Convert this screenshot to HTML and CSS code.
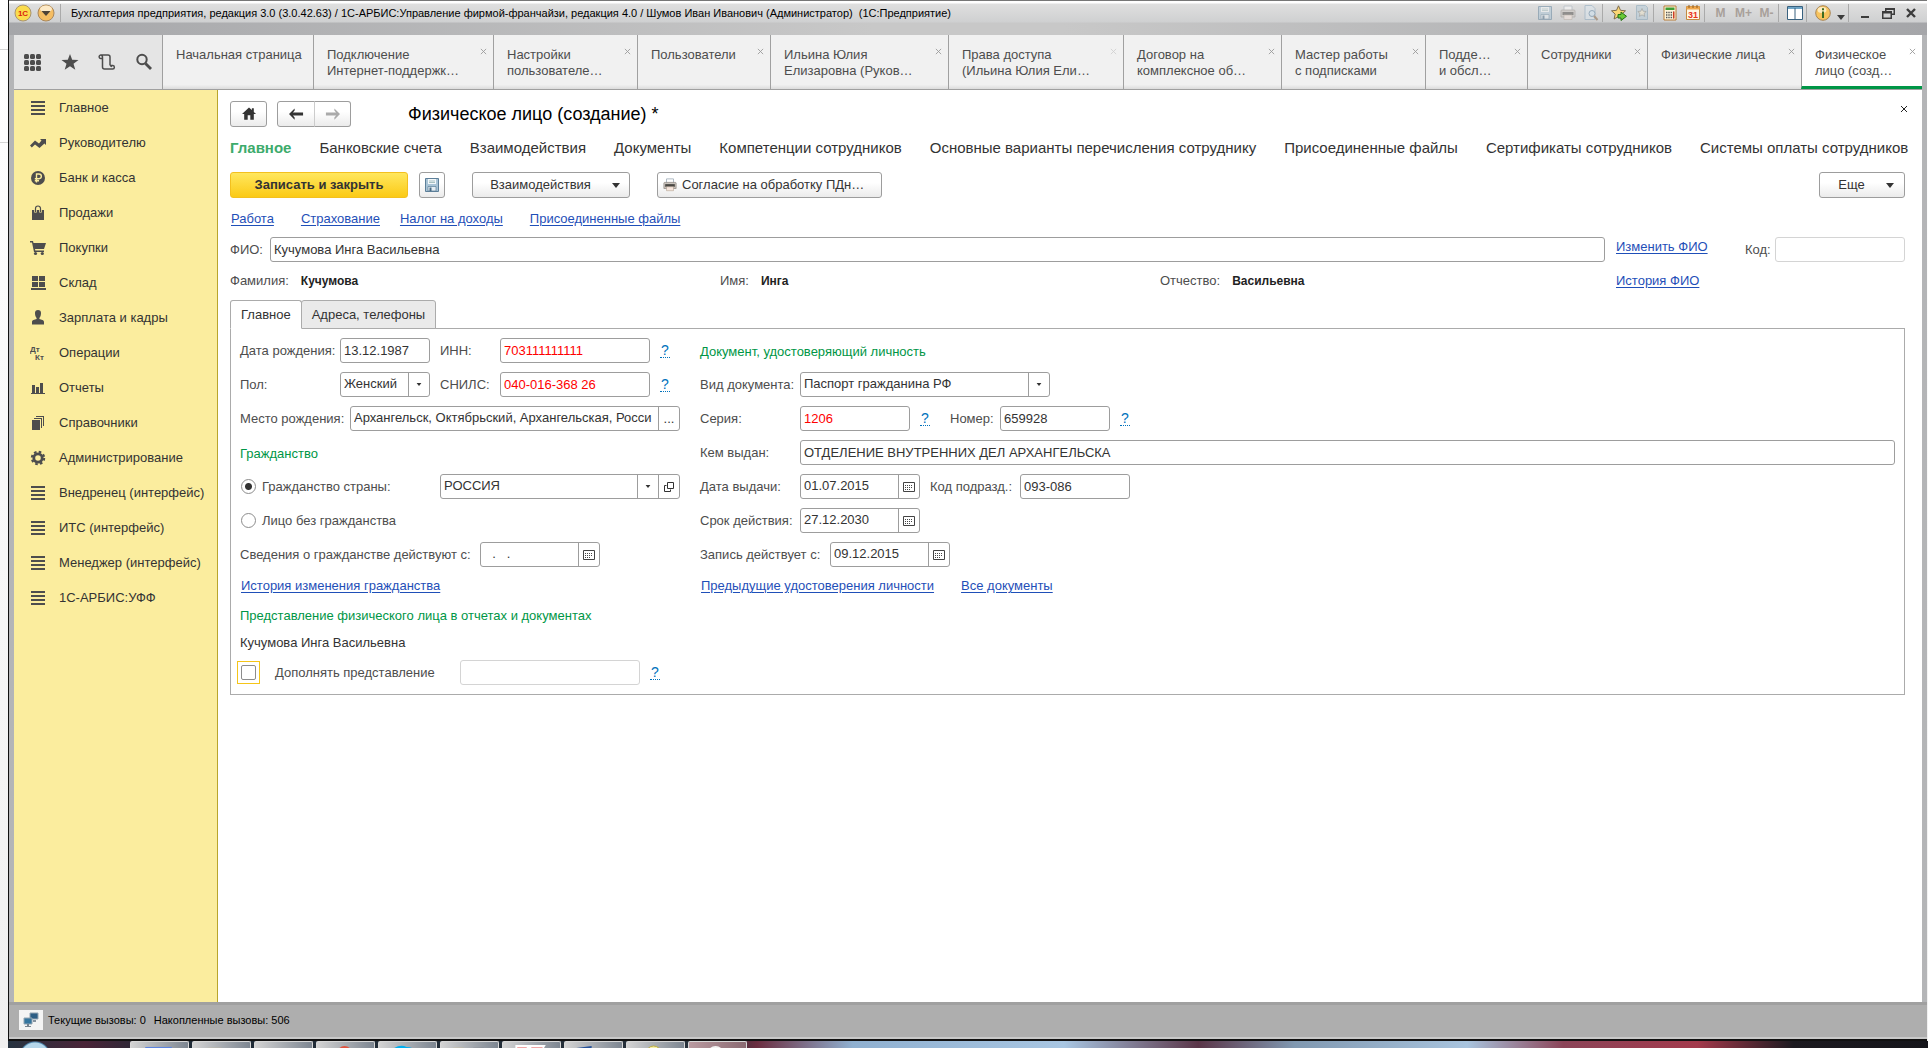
FILE: index.html
```html
<!DOCTYPE html>
<html lang="ru">
<head>
<meta charset="utf-8">
<title>Физическое лицо (создание)</title>
<link rel="stylesheet" href="styles.css">
</head>
<body>
<svg class="sprite" aria-hidden="true">
  <symbol id="i-lines" viewBox="0 0 16 16"><path d="M1 1h14v2H1zM1 5h14v2H1zM1 9h14v2H1zM1 13h14v2H1z"/></symbol>
  <symbol id="i-trend" viewBox="0 0 16 16"><path d="M0 10.500 5 5.500 9 8.500 11.500 5.500 10 4h6v6l-1.600-1.600L9.500 13 5 9.500 1.800 12.500z"/></symbol>
  <symbol id="i-ruble" viewBox="0 0 16 16"><circle cx="8" cy="8" r="7"/><path d="M6.500 12.500V4H9a2.300 2.300 0 0 1 0 4.700H4.800M4.800 10.700H9" fill="none" stroke="#fbed9e" stroke-width="1.400"/></symbol>
  <symbol id="i-bag" viewBox="0 0 16 16"><path d="M2 5h12v10H2z"/><path d="M5.500 7.500V3.500a2.500 2.500 0 0 1 5 0v4" fill="none" stroke="#fbed9e" stroke-width="2.600"/><path d="M5.500 7V3.500a2.500 2.500 0 0 1 5 0V7" fill="none" stroke="#4d4d4d" stroke-width="1.200"/></symbol>
  <symbol id="i-cart" viewBox="0 0 16 16"><path d="M0 1h3l.5 2H16l-2 6H5l.3 1.500H14V12H4L2 2.500H0z"/><circle cx="5.500" cy="13.500" r="1.600"/><circle cx="12.300" cy="13.500" r="1.600"/></symbol>
  <symbol id="i-store" viewBox="0 0 16 16"><path d="M2 1h6v5H2zM9 1h6v5H9zM2 7h6v5H2zM9 7h6v5H9zM1 13h15v2H1z"/></symbol>
  <symbol id="i-person" viewBox="0 0 16 16"><path d="M5 3a3 3 0 0 1 6 0c0 2-.6 4-1.600 5v1c2 .6 4.600.8 4.600 3v2.500H2V12c0-2.200 2.600-2.400 4.600-3V8C5.600 7 5 5 5 3z"/></symbol>
  <symbol id="i-bars" viewBox="0 0 16 16"><path d="M2 5h3v8H2zM6 7h3v6H6zM10 3h3v10h-3zM1 13h14v1H1z"/></symbol>
  <symbol id="i-books" viewBox="0 0 16 16"><path d="M2 5h8v10H2zM4 3h8v10h-1V4H4zM6 1h8v10h-1V2H6z"/></symbol>
  <symbol id="i-gear" viewBox="0 0 16 16"><circle cx="8" cy="8" r="4.200" fill="none" stroke="#4d4d4d" stroke-width="2.800"/><circle cx="8" cy="8" r="6.200" fill="none" stroke="#4d4d4d" stroke-width="2" stroke-dasharray="2.600 2.270"/></symbol>
  <symbol id="i-floppy" viewBox="0 0 16 16"><path d="M1.500 1.500h13v13h-13z" fill="#a9c4d6" stroke="#5c7f99"/><path d="M4 2h8v5H4z" fill="#f4f8fa"/><path d="M5 4h6M5 5.500h6" stroke="#8aa" stroke-width=".7"/><path d="M4 9.500h8V14H4z" fill="#e6eef3" stroke="#5c7f99" stroke-width=".7"/><path d="M5.500 10.500h2V14h-2z" fill="#476a85"/></symbol>
  <symbol id="i-printer" viewBox="0 0 16 16"><path d="M4 1h8v5H4z" fill="#fff" stroke="#a4b0bb"/><path d="M1 6q0-1 1-1h12q1 0 1 1v6H1z" fill="#c9c3bd" stroke="#8e8780" stroke-width=".8"/><path d="M2.500 7h11v3h-11z" fill="#4a4743"/><path d="M4 10h8v4.500H4z" fill="#f6e5dc" stroke="#a98" stroke-width=".6"/></symbol>
  <symbol id="i-preview" viewBox="0 0 16 16"><path d="M2 .5h7l3 3v11H2z" fill="#dce7ef" stroke="#86a5bd"/><circle cx="9" cy="8.500" r="3" fill="#cfe4f3" stroke="#567f9f"/><path d="m11 11 3.500 4" stroke="#85613f" stroke-width="2"/></symbol>
  <symbol id="i-staradd" viewBox="0 0 16 16"><path d="m7.500.8 2 4.500 5 .5-3.700 3.300 1.100 4.900-4.400-2.500L3.100 14l1.100-4.900L.5 5.800l5-.5z" fill="#fbd674" stroke="#7d6b4c"/><path d="M7 9.500h3V7l5.500 4.300-5.500 4.200V13H7z" fill="#69c936" stroke="#257014"/></symbol>
  <symbol id="i-stardoc" viewBox="0 0 16 16"><path d="M2.500.5h9l2 2v12h-11z" fill="#b4cbd9" stroke="#7ea0b5"/><path d="m8 3.500 1.200 2.700 3 .3-2.200 2 .7 2.900L8 9.900l-2.700 1.500.7-2.900-2.200-2 3-.3z" fill="#eee5ca" stroke="#6a6f6c" stroke-width=".7"/></symbol>
  <symbol id="i-calc" viewBox="0 0 16 16"><path d="M2 1h12v14H2z" fill="#fff6dc" stroke="#b77d38"/><path d="M3.500 2.500h9v2.500h-9z" fill="#3e9e31"/><path d="M4 7.500h8M4 10h8M4 12.500h8" stroke="#555" stroke-width="1.400" stroke-dasharray="1.400 .9"/><path d="M11 6.500h1.500v7H11z" fill="#cf3d25"/></symbol>
  <symbol id="i-cal31" viewBox="0 0 16 16"><path d="M1.500 1.500h13v13h-13z" fill="#fff7e6" stroke="#c28a42"/><path d="M1.500 1.500h13v3h-13z" fill="#f0a74b"/><path d="M4 0v3M8 0v3M12 0v3" stroke="#8e5d22"/><text x="8" y="13" text-anchor="middle" font-size="9" font-weight="bold" font-family="Liberation Sans, sans-serif" fill="#e8321c">31</text></symbol>
  <symbol id="i-cols" viewBox="0 0 16 16"><path d="M.5 1.500h15v13H.5z" fill="#fff" stroke="#38617f"/><path d="M1 2h14v2H1z" fill="#6fa5c7"/><path d="M8 3v11" stroke="#38617f"/></symbol>
  <symbol id="i-info" viewBox="0 0 16 16"><circle cx="8" cy="8" r="7.300" fill="#f8c45e" stroke="#a88555"/><ellipse cx="7" cy="5" rx="4.500" ry="3" fill="#fdebbf"/><path d="M7 6.500h2V13H7zM7 3.200h2v2H7z" fill="#3d6b22"/></symbol>
  <symbol id="i-down" viewBox="0 0 8 5"><path d="M0 0h8L4 5z"/></symbol>
  <symbol id="i-min" viewBox="0 0 16 16"><path d="M4 11h8v2H4z"/></symbol>
  <symbol id="i-restore" viewBox="0 0 16 16"><path d="M5 3h10v7h-3v4H2V6h3zm1.500 2v1H12v2.500h1.500V5zM3.500 8.500v4h7v-4z" fill-rule="evenodd"/></symbol>
  <symbol id="i-x" viewBox="0 0 16 16"><path d="m4 4 8 8M12 4l-8 8" stroke="#3c3c3c" stroke-width="2.400"/></symbol>
  <symbol id="i-xthin" viewBox="0 0 8 8"><path d="m1 1 6 6M7 1 1 7" stroke="currentColor" fill="none"/></symbol>
  <symbol id="i-grid" viewBox="0 0 18 18"><rect x="0" y="1" width="5" height="5" rx="1.500"/><rect x="6" y="1" width="5" height="5" rx="1.500"/><rect x="12" y="1" width="5" height="5" rx="1.500"/><rect x="0" y="7" width="5" height="5" rx="1.500"/><rect x="6" y="7" width="5" height="5" rx="1.500"/><rect x="12" y="7" width="5" height="5" rx="1.500"/><rect x="0" y="13" width="5" height="5" rx="1.500"/><rect x="6" y="13" width="5" height="5" rx="1.500"/><rect x="12" y="13" width="5" height="5" rx="1.500"/></symbol>
  <symbol id="i-star" viewBox="0 0 18 18"><path d="m9 1 2.200 5.800 6.300.2-5 3.800 1.800 6-5.300-3.500-5.300 3.500 1.800-6L.5 7l6.300-.2z"/></symbol>
  <symbol id="i-scroll" viewBox="0 0 18 18"><path d="M4.500 5.500H2.800a1.700 1.700 0 1 1 .2-3.500h7a2 2 0 0 1 2 2v8.500M4.500 5.500V14a2 2 0 0 0 2 2h8.200a1.700 1.700 0 1 0-1.700-2M3.200 2q1.500.4 1.300 3.500M12 12.500h2.500" fill="none" stroke="#4d4d4d" stroke-width="1.500"/></symbol>
  <symbol id="i-search" viewBox="0 0 18 18"><circle cx="7" cy="6.500" r="4.700" fill="none" stroke="#4d4d4d" stroke-width="2"/><path d="m10.500 10.500 5.500 5.500" stroke="#4d4d4d" stroke-width="2.800"/></symbol>
  <symbol id="i-home" viewBox="0 0 16 14"><path d="M8 0 0 7.500h2.500V14h4V9h3v5h4V7.500H16L13.500 5.200V1h-2.200v2z"/></symbol>
  <symbol id="i-left" viewBox="0 0 16 12"><path d="m0 6 6-6v2.200L4.200 4.500H15v3H4.200L6 9.800V12z"/></symbol>
  <symbol id="i-open" viewBox="0 0 10 10"><path d="M3.500.5h6v6h-6zM2.500 3.500h-2v6h6v-2" fill="none" stroke="#333"/></symbol>
  <symbol id="i-cal" viewBox="0 0 12 10"><path d="M.5.500h11v9H.5z" fill="none" stroke="#444"/><path d="M2 3.500h8M2 5.500h8M2 7.500h5" stroke="#444" stroke-dasharray="1 1"/></symbol>
  <symbol id="i-net" viewBox="0 0 16 16"><path d="M7 1h8v6H7z" fill="#2c5d84" stroke="#93a4b2"/><path d="M10 8h3v2h-3z" fill="#8794a0"/><path d="M1 6h8v6H1z" fill="#35769f" stroke="#93a4b2"/><path d="M4 12h2v2h2v1H2v-1h2z" fill="#77838e"/></symbol>
</svg>

<div class="window">
  <header class="titlebar">
    <svg class="logo" viewBox="0 0 18 18"><circle cx="9" cy="9" r="8" fill="#fbdc4c" stroke="#a99470"/><text x="9" y="12" text-anchor="middle" font-size="8" font-weight="bold" font-family="Liberation Sans, sans-serif" fill="#d8230e">1С</text></svg>
    <svg class="logo" viewBox="0 0 18 18"><circle cx="9" cy="9" r="8" fill="#f5bd62" stroke="#a9875c"/><ellipse cx="9" cy="5" rx="6" ry="3.500" fill="#fdeac7"/><path d="M4.500 7h9L9 12z" fill="#4e4336"/></svg>
    <i class="tb-sep"></i>
    <span class="app-title">Бухгалтерия предприятия, редакция 3.0 (3.0.42.63) / 1С-АРБИС:Управление фирмой-франчайзи, редакция 4.0 / Шумов Иван Иванович (Администратор)&nbsp; (1С:Предприятие)</span>
    <button class="tb dim" aria-label="Сохранить"><svg><use href="#i-floppy"/></svg></button>
    <button class="tb dim" aria-label="Печать"><svg><use href="#i-printer"/></svg></button>
    <button class="tb dim" aria-label="Просмотр"><svg><use href="#i-preview"/></svg></button>
    <i class="tb-sep"></i>
    <button class="tb" aria-label="В избранное"><svg><use href="#i-staradd"/></svg></button>
    <button class="tb dim" aria-label="Избранное"><svg><use href="#i-stardoc"/></svg></button>
    <i class="tb-sep"></i>
    <button class="tb" aria-label="Калькулятор"><svg><use href="#i-calc"/></svg></button>
    <button class="tb" aria-label="Календарь"><svg><use href="#i-cal31"/></svg></button>
    <i class="tb-sep"></i>
    <button class="tb mem">M</button>
    <button class="tb mem">M+</button>
    <button class="tb mem">M-</button>
    <i class="tb-sep"></i>
    <button class="tb" aria-label="Окна"><svg><use href="#i-cols"/></svg></button>
    <i class="tb-sep"></i>
    <button class="tb" aria-label="Справка"><svg><use href="#i-info"/></svg></button>
    <button class="tb slim" aria-label="Меню справки"><svg><use href="#i-down"/></svg></button>
    <i class="tb-sep"></i>
    <button class="tb" aria-label="Свернуть"><svg><use href="#i-min"/></svg></button>
    <button class="tb" aria-label="Восстановить"><svg><use href="#i-restore"/></svg></button>
    <button class="tb" aria-label="Закрыть"><svg><use href="#i-x"/></svg></button>
  </header>

  <div class="tabbar">
    <div class="tools">
      <button aria-label="Все функции"><svg><use href="#i-grid"/></svg></button>
      <button aria-label="Избранное"><svg><use href="#i-star"/></svg></button>
      <button aria-label="История"><svg><use href="#i-scroll"/></svg></button>
      <button aria-label="Поиск"><svg><use href="#i-search"/></svg></button>
    </div>
    <nav class="tabs">
      <div class="tab"><a href="#">Начальная страница</a></div>
      <div class="tab"><a href="#">Подключение<br>Интернет-поддержк…</a><button class="tab-x" aria-label="Закрыть"><svg><use href="#i-xthin"/></svg></button></div>
      <div class="tab"><a href="#">Настройки<br>пользователе…</a><button class="tab-x" aria-label="Закрыть"><svg><use href="#i-xthin"/></svg></button></div>
      <div class="tab"><a href="#">Пользователи</a><button class="tab-x" aria-label="Закрыть"><svg><use href="#i-xthin"/></svg></button></div>
      <div class="tab"><a href="#">Ильина Юлия<br>Елизаровна (Руков…</a><button class="tab-x" aria-label="Закрыть"><svg><use href="#i-xthin"/></svg></button></div>
      <div class="tab"><a href="#">Права доступа<br>(Ильина Юлия Ели…</a><button class="tab-x off" aria-label="Закрыть"><svg><use href="#i-xthin"/></svg></button></div>
      <div class="tab"><a href="#">Договор на<br>комплексное об…</a><button class="tab-x" aria-label="Закрыть"><svg><use href="#i-xthin"/></svg></button></div>
      <div class="tab"><a href="#">Мастер работы<br>с подписками</a><button class="tab-x" aria-label="Закрыть"><svg><use href="#i-xthin"/></svg></button></div>
      <div class="tab"><a href="#">Подде…<br>и обсл…</a><button class="tab-x" aria-label="Закрыть"><svg><use href="#i-xthin"/></svg></button></div>
      <div class="tab"><a href="#">Сотрудники</a><button class="tab-x" aria-label="Закрыть"><svg><use href="#i-xthin"/></svg></button></div>
      <div class="tab"><a href="#">Физические лица</a><button class="tab-x" aria-label="Закрыть"><svg><use href="#i-xthin"/></svg></button></div>
      <div class="tab active"><a href="#">Физическое<br>лицо (созд…</a><button class="tab-x" aria-label="Закрыть"><svg><use href="#i-xthin"/></svg></button></div>
    </nav>
  </div>

  <div class="body">
    <nav class="sidebar">
      <a href="#"><svg><use href="#i-lines"/></svg>Главное</a>
      <a href="#"><svg><use href="#i-trend"/></svg>Руководителю</a>
      <a href="#"><svg><use href="#i-ruble"/></svg>Банк и касса</a>
      <a href="#"><svg><use href="#i-bag"/></svg>Продажи</a>
      <a href="#"><svg><use href="#i-cart"/></svg>Покупки</a>
      <a href="#"><svg><use href="#i-store"/></svg>Склад</a>
      <a href="#"><svg><use href="#i-person"/></svg>Зарплата и кадры</a>
      <a href="#"><svg viewBox="0 0 16 16" class="dtkt"><text x="0" y="7">Дт</text><text x="5" y="15">Кт</text></svg>Операции</a>
      <a href="#"><svg><use href="#i-bars"/></svg>Отчеты</a>
      <a href="#"><svg><use href="#i-books"/></svg>Справочники</a>
      <a href="#"><svg><use href="#i-gear"/></svg>Администрирование</a>
      <a href="#"><svg><use href="#i-lines"/></svg>Внедренец (интерфейс)</a>
      <a href="#"><svg><use href="#i-lines"/></svg>ИТС (интерфейс)</a>
      <a href="#"><svg><use href="#i-lines"/></svg>Менеджер (интерфейс)</a>
      <a href="#"><svg><use href="#i-lines"/></svg>1С-АРБИС:УФФ</a>
    </nav>

    <main class="content">
      <div class="head">
        <button class="btn home" aria-label="Домой"><svg><use href="#i-home"/></svg></button>
        <div class="history">
          <button class="btn" aria-label="Назад"><svg><use href="#i-left"/></svg></button>
          <button class="btn fwd" aria-label="Вперед" disabled><svg><use href="#i-left"/></svg></button>
        </div>
        <h1>Физическое лицо (создание) *</h1>
        <button class="form-x" aria-label="Закрыть форму"><svg><use href="#i-xthin"/></svg></button>
      </div>

      <nav class="sections">
        <a href="#" class="on">Главное</a>
        <a href="#">Банковские счета</a>
        <a href="#">Взаимодействия</a>
        <a href="#">Документы</a>
        <a href="#">Компетенции сотрудников</a>
        <a href="#">Основные варианты перечисления сотруднику</a>
        <a href="#">Присоединенные файлы</a>
        <a href="#">Сертификаты сотрудников</a>
        <a href="#">Системы оплаты сотрудников</a>
      </nav>

      <div class="toolbar">
        <button class="btn gold">Записать и закрыть</button>
        <button class="btn save" aria-label="Записать"><svg><use href="#i-floppy"/></svg></button>
        <button class="btn menu">Взаимодействия<svg><use href="#i-down"/></svg></button>
        <button class="btn print"><svg><use href="#i-printer"/></svg>Согласие на обработку ПДн…</button>
        <button class="btn more">Еще<svg><use href="#i-down"/></svg></button>
      </div>

      <div class="links">
        <a href="#">Работа</a>
        <a href="#">Страхование</a>
        <a href="#">Налог на доходы</a>
        <a href="#">Присоединенные файлы</a>
      </div>

      <div class="row name-row">
        <label for="fio" class="w40">ФИО:</label>
        <input id="fio" class="grow" value="Кучумова Инга Васильевна">
        <div class="name-side">
          <a href="#" class="lnk">Изменить ФИО</a>
          <label for="code">Код:</label>
          <input id="code" class="f130 pale">
        </div>
      </div>
      <div class="parts">
        <div class="part p490"><span>Фамилия:</span><b>Кучумова</b></div>
        <div class="part p440"><span>Имя:</span><b>Инга</b></div>
        <div class="part p445"><span>Отчество:</span><b>Васильевна</b></div>
        <div class="name-side"><a href="#" class="lnk">История ФИО</a></div>
      </div>

      <div class="page-tabs">
        <button class="on">Главное</button><button>Адреса, телефоны</button>
      </div>
      <div class="panel">
        <section class="col">
          <div class="row">
            <label for="born" class="w100">Дата рождения:</label><input id="born" class="f90" value="13.12.1987">
            <label for="inn" class="w60 g10">ИНН:</label><input id="inn" class="f150 red" value="703111111111"><a href="#" class="q">?</a>
          </div>
          <div class="row">
            <label for="sex" class="w100">Пол:</label>
            <div class="combo f90"><select id="sex"><option>Женский</option></select><span class="cell"><svg class="arr"><use href="#i-down"/></svg></span></div>
            <label for="snils" class="w60 g10">СНИЛС:</label><input id="snils" class="f150 red" value="040-016-368 26"><a href="#" class="q">?</a>
          </div>
          <div class="row">
            <label for="place" class="w110">Место рождения:</label>
            <div class="combo grow"><input id="place" value="Архангельск, Октябрьский, Архангельская, Росси"><button class="cell">...</button></div>
          </div>
          <h2 class="row">Гражданство</h2>
          <div class="row">
            <input type="radio" name="cit" id="cit1" checked><label for="cit1" class="grow">Гражданство страны:</label>
            <div class="combo f240"><select aria-label="Страна"><option>РОССИЯ</option></select><span class="cell"><svg class="arr"><use href="#i-down"/></svg></span><button class="cell" aria-label="Открыть"><svg class="ico10"><use href="#i-open"/></svg></button></div>
          </div>
          <div class="row"><input type="radio" name="cit" id="cit2"><label for="cit2">Лицо без гражданства</label></div>
          <div class="row">
            <label for="since" class="w240">Сведения о гражданстве действуют с:</label>
            <div class="combo f120"><input id="since" class="blank" value="  .   ."><button class="cell" aria-label="Календарь"><svg class="cal"><use href="#i-cal"/></svg></button></div>
          </div>
          <div class="row low"><a href="#" class="lnk">История изменения гражданства</a></div>
          <h2 class="row low">Представление физического лица в отчетах и документах</h2>
          <div class="row text">Кучумова Инга Васильевна</div>
          <div class="row">
            <span class="focus"><input type="checkbox" id="ext"></span><label for="ext" class="ext">Дополнять представление</label>
            <input class="f180 pale" aria-label="Дополнение"><a href="#" class="q">?</a>
          </div>
        </section>

        <section class="col">
          <h2 class="row">Документ, удостоверяющий личность</h2>
          <div class="row">
            <label for="kind" class="w100">Вид документа:</label>
            <div class="combo f250"><select id="kind"><option>Паспорт гражданина РФ</option></select><span class="cell"><svg class="arr"><use href="#i-down"/></svg></span></div>
          </div>
          <div class="row">
            <label for="ser" class="w100">Серия:</label><input id="ser" class="f110 red" value="1206"><a href="#" class="q">?</a>
            <label for="num" class="w50 g20">Номер:</label><input id="num" class="f110" value="659928"><a href="#" class="q">?</a>
          </div>
          <div class="row">
            <label for="by" class="w100">Кем выдан:</label><input id="by" class="grow" value="ОТДЕЛЕНИЕ ВНУТРЕННИХ ДЕЛ АРХАНГЕЛЬСКА">
          </div>
          <div class="row">
            <label for="issued" class="w100">Дата выдачи:</label>
            <div class="combo f120"><input id="issued" value="01.07.2015"><button class="cell" aria-label="Календарь"><svg class="cal"><use href="#i-cal"/></svg></button></div>
            <label for="dep" class="w90 g10">Код подразд.:</label><input id="dep" class="f110" value="093-086">
          </div>
          <div class="row">
            <label for="till" class="w100">Срок действия:</label>
            <div class="combo f120"><input id="till" value="27.12.2030"><button class="cell" aria-label="Календарь"><svg class="cal"><use href="#i-cal"/></svg></button></div>
          </div>
          <div class="row">
            <label for="rec" class="w130">Запись действует с:</label>
            <div class="combo f120"><input id="rec" value="09.12.2015"><button class="cell" aria-label="Календарь"><svg class="cal"><use href="#i-cal"/></svg></button></div>
          </div>
          <div class="row low"><a href="#" class="lnk">Предыдущие удостоверения личности</a><a href="#" class="lnk g27">Все документы</a></div>
        </section>
      </div>
    </main>
  </div>

  <footer class="status">
    <span class="net"><svg><use href="#i-net"/></svg></span>
    <span>Текущие вызовы: 0</span><span>Накопленные вызовы: 506</span>
  </footer>
</div>

<div class="taskbar" aria-hidden="true">
  <i class="start"></i>
  <i class="task"><svg viewBox="0 0 60 8"><path d="M15 5h28v3H15z" fill="#5b83e0"/></svg></i>
  <i class="task"><svg viewBox="0 0 60 8"><path d="M16 6h14v2H16z" fill="#d9c06a"/></svg></i>
  <i class="task"></i>
  <i class="task"><svg viewBox="0 0 60 8"><circle cx="29" cy="12" r="8" fill="#e0533f"/></svg></i>
  <i class="task"><svg viewBox="0 0 60 8"><path d="M16 8V6q7-4 13-1 6 0 8 3z" fill="#00aff0"/></svg></i>
  <i class="task"><svg viewBox="0 0 60 8"><path d="M13 6h11v2H13z" fill="#f0bf3c"/><path d="M34 6h11v2H34z" fill="#5d6168"/></svg></i>
  <i class="task"><svg viewBox="0 0 60 8"><path d="M13 3h32l-3 5H13z" fill="#fff"/><path d="M15 5h10v3H15zM30 5h12l-2 3H29z" fill="#f0a6a6"/></svg></i>
  <i class="task"><svg viewBox="0 0 60 8"><path d="M12 6 28 4v4H11z" fill="#24509a"/></svg></i>
  <i class="task"><svg viewBox="0 0 60 8"><circle cx="28" cy="12" r="8" fill="#f7f0a6" stroke="#b8a93c"/></svg></i>
  <i class="task rose"><svg viewBox="0 0 60 8"><circle cx="28" cy="13" r="9" fill="#f3f3f3"/></svg></i>
</div>
</body>
</html>
```
FILE: styles.css
```css
* { box-sizing: border-box; }

body {
  margin: 0;
  min-height: 100vh;
  display: flex;
  flex-direction: column;
  font: 13px/16px "Liberation Sans", Arial, sans-serif;
  color: #333;
  background:
    linear-gradient(#d4d4d4, #d4d4d4) 0 49px / 8px 1px no-repeat,
    linear-gradient(#d4d4d4, #d4d4d4) 0 142px / 8px 1px no-repeat,
    linear-gradient(#fff, #f0f0f0);
}

button, input, select { font: inherit; color: inherit; margin: 0; }
button { border: 0; padding: 0; background: none; }
a { color: inherit; text-decoration: none; }
svg { flex: none; }
.sprite { display: none; }

/* window frame */
.window {
  flex: 1;
  display: flex;
  flex-direction: column;
  margin: 0 1px 0 8px;
  border: 1px solid #111;
  border-width: 0 0 2px 1px;
  padding: 0 5px;
  background: linear-gradient(90deg, #b4b5b7, #c8c8c8 50%, #b4b5b7);
}

.titlebar {
  display: flex;
  align-items: center;
  height: 35px;
  margin: 0 -5px;
  padding: 0 5px 10px;
  border-top: 1px solid #777;
  background:
    linear-gradient(#fff 0, #fff 2px, #dfdfdf 3px, #cfd0d1 21px, transparent 22px),
    linear-gradient(90deg, #a5a6a9, #c8c8c8 45%, #c8c8c8 55%, #a5a6a9);
  color: #000;
}
.logo { width: 18px; height: 18px; margin-right: 5px; }
.tb-sep { width: 5px; height: 18px; border-left: 1px solid #aaa; }
.app-title { flex: 1; font-size: 11px; padding-left: 6px; white-space: nowrap; overflow: hidden; }
.tb { width: 23px; height: 22px; display: flex; align-items: center; justify-content: center; }
.tb svg { width: 16px; height: 16px; fill: #3c3c3c; }
.tb.slim { width: 14px; padding-top: 8px; }
.tb.slim svg { width: 8px; height: 5px; }
.dim { opacity: .5; }
.mem { font-size: 12px; font-weight: bold; color: #a8a09a; }

/* open-window tabs */
.tabbar { display: flex; height: 55px; background: #f1f1f1; border-bottom: 1px solid #a0a0a0; }
.tools { width: 148px; flex: none; display: flex; align-items: center; gap: 8px; padding-left: 8px; background: #e5e5e5; }
.tools button { width: 29px; height: 30px; padding-left: 2px; text-align: left; }
.tools svg { width: 18px; height: 18px; fill: #4d4d4d; vertical-align: middle; }
.tabs {
  flex: 1;
  display: grid;
  grid-template-columns: 151fr 180fr 144fr 133fr 178fr 175fr 158fr 144fr 102fr 120fr 154fr 121fr;
}
.tab {
  display: flex;
  justify-content: space-between;
  align-items: flex-start;
  min-width: 0;
  padding: 12px 4px 0 13px;
  border-left: 1px solid #a0a0a0;
  background: linear-gradient(#f1f1f1 92%, #dcdcdc);
  color: #4d4d4d;
  white-space: nowrap;
}
.tab.active { background: #fff; border-bottom: 3px solid #009646; }
.tab-x { width: 12px; height: 8px; color: #999; line-height: 0; }
.tab-x.off { color: #d0d0d0; }
.tab-x svg { width: 7px; height: 7px; }

.body { flex: 1; display: flex; background: #fff; }

.sidebar { width: 204px; flex: none; background: #fbed9e; border-right: 1px solid #b9a52c; }
.sidebar a { display: flex; align-items: center; gap: 13px; height: 35px; padding-left: 16px; }
.sidebar svg { width: 16px; height: 16px; fill: #4d4d4d; }
.dtkt text { font: bold 8px "Liberation Sans", sans-serif; }

/* form header */
.content { flex: 1; min-width: 0; padding: 11px 17px 12px 12px; }
.head { display: flex; height: 25px; align-items: center; }
.btn {
  display: flex;
  align-items: center;
  justify-content: center;
  height: 26px;
  border: 1px solid #9d9d9d;
  border-radius: 3px;
  background: linear-gradient(#fff 40%, #ebebeb);
}
.btn svg { fill: #333; }
.home { width: 37px; }
.home svg { width: 14px; height: 13px; }
.history { display: flex; margin: 0 57px 0 10px; }
.history .btn { width: 38px; border-radius: 3px 0 0 3px; }
.history .fwd { width: 37px; margin-left: -1px; border-left-color: #ccc; border-radius: 0 3px 3px 0; }
.history svg { width: 15px; height: 12px; }
.fwd svg { fill: #aaa; transform: scaleX(-1); }
h1 { flex: 1; margin: 0; font-size: 18px; line-height: 26px; font-weight: normal; color: #000; }
.form-x { display: flex; align-items: center; align-self: flex-start; width: 8px; height: 16px; margin-right: -3px; color: #222; }
.form-x svg { width: 8px; height: 8px; }

.sections { display: flex; gap: 28px; margin-bottom: 2px; font-size: 15px; line-height: 44px; white-space: nowrap; }
.sections .on { color: #3dab6c; font-weight: bold; }

.toolbar { display: flex; }
.gold { width: 178px; border-color: #f3c01f; background: linear-gradient(#ffe75e, #fbca16); font-weight: bold; }
.save { width: 26px; margin-left: 11px; }
.save svg { width: 16px; height: 16px; }
.menu { width: 158px; margin-left: 27px; gap: 21px; padding-left: 8px; }
.menu svg, .more svg { width: 8px; height: 5px; }
.print { width: 225px; margin-left: 27px; justify-content: flex-start; gap: 5px; padding-left: 5px; }
.print svg { width: 14px; height: 14px; }
.more { width: 86px; margin-left: auto; gap: 21px; padding-left: 8px; }

.links, .lnk { color: #1f4fb8; }
.links a, .lnk { text-decoration: underline; text-underline-offset: 2px; }
.links { display: flex; margin: 11px 0 8px; padding-left: 1px; line-height: 20px; }
.links a { margin-right: 27px; }
.links a:nth-child(2) { margin-right: 20px; }

/* fields */
.row { display: flex; align-items: center; height: 25px; color: #4d4d4d; white-space: nowrap; }
.row label { flex: none; }
.row > input, .name-side input, .combo {
  height: 25px;
  border: 1px solid #9d9d9d;
  border-radius: 3px;
  background: #fff;
  color: #333;
}
.row > input, .name-side input { padding: 0 3px 1px; }
.row input.pale { border-color: #d4d4d4; }
.row input.red { color: #f00; }
.combo { display: flex; overflow: hidden; }
.combo input, .combo select { flex: 1; min-width: 0; border: 0; padding: 0 0 1px 3px; background: none; appearance: none; }
.combo .blank { padding-left: 4px; white-space: pre; }
.cell { width: 21px; flex: none; display: flex; align-items: center; justify-content: center; border-left: 1px solid #9d9d9d; }
.arr { width: 6px; height: 3px; fill: #333; }
.ico10 { width: 10px; height: 10px; }
.cal { width: 12px; height: 10px; }
.grow, .row label.grow { flex: 1; min-width: 0; }
.w40 { width: 40px; }
.w50 { width: 50px; }
.w60 { width: 60px; }
.w90 { width: 90px; }
.w100 { width: 100px; }
.w110 { width: 110px; }
.w130 { width: 130px; }
.w240 { width: 240px; }
.f90 { width: 90px; }
.f110 { width: 110px; }
.f120 { width: 120px; }
.f130 { width: 130px; }
.f150 { width: 150px; }
.f180 { width: 180px; }
.f240 { width: 240px; }
.f250 { width: 250px; }
.g10 { margin-left: 10px; }
.g20 { margin-left: 20px; }
.g27 { margin-left: 27px; }
.q { width: 10px; margin-left: 10px; font-size: 14px; text-align: center; color: #0072bc; border-bottom: 1px dotted #0072bc; line-height: 14px; }

.name-side { width: 300px; flex: none; display: flex; align-items: center; padding-left: 11px; }
.name-side .lnk { flex: 1; }
.name-row .lnk { align-self: flex-start; line-height: 20px; }
.name-side label { width: 30px; }
.parts { display: flex; margin: 10px 0; line-height: 18px; color: #4d4d4d; }
.part { display: flex; gap: 12px; }
.part b { font-size: 12px; color: #222; }
.p440 { flex: 440 1 0; }
.p445 { flex: 445 1 0; }
.p490 { flex: 490 1 0; }

.page-tabs { display: flex; margin-bottom: -1px; }
.page-tabs button {
  height: 29px;
  padding: 0 10px;
  border: 1px solid #ababab;
  border-radius: 3px 3px 0 0;
  background: #eaeaea;
}
.page-tabs button + button { margin-left: -1px; }
.page-tabs .on { background: #fff; border-bottom-color: #fff; position: relative; }

.panel {
  display: grid;
  grid-template-columns: 440px 1fr;
  gap: 20px;
  padding: 9px;
  border: 1px solid #ababab;
}
.col { display: flex; flex-direction: column; gap: 9px; min-width: 0; }
h2 { margin: 0; font-size: 13px; font-weight: normal; }
h2.row { color: #009646; padding-top: 2px; }
.row.low { height: 20px; padding-left: 1px; }
h2.row.low { padding-left: 0; }
.row.text { height: 17px; color: #333; }

input[type="radio"], input[type="checkbox"] {
  appearance: none;
  flex: none;
  width: 15px;
  height: 15px;
  border: 1px solid #8c8c8c;
  background: #fff;
}
.row > input[type="radio"] { margin: 0 6px 0 1px; padding: 0; width: 15px; height: 15px; border-radius: 50%; }
.row > input[type="radio"]:checked { background: radial-gradient(circle, #333 3px, #fff 4px); }
input[type="checkbox"] { border-radius: 2px; }
.focus { width: 23px; height: 23px; display: flex; align-items: center; justify-content: center; margin: 0 15px 0 -3px; border: 1px solid #f5c518; }
.ext { width: 185px; }

.status {
  display: flex;
  align-items: center;
  gap: 8px;
  height: 37px;
  margin: 0 -5px;
  padding: 0 0 3px 10px;
  border-top: 3px solid #a0a0a0;
  border-bottom: 2px solid #c9c9c9;
  background: #aeaeae;
  color: #000;
  font-size: 11px;
}
.net { width: 24px; height: 20px; display: flex; align-items: center; justify-content: center; margin-right: -3px; background: #f4f4f4; }
.net svg { width: 16px; height: 16px; }

/* desktop task bar */
.taskbar {
  display: flex;
  gap: 3px;
  height: 7px;
  flex: none;
  margin-left: 8px;
  overflow: hidden;
  background: linear-gradient(90deg, #263340 0, #4a2438 4%, #1e2a36 8%, #26303a 37%, #6b2d40 39%, #8fb0d0 44%, #a8c6e2 55%, #5a3548 62%, #8098b0 67%, #a8c4de 76%, #8b4458 81%, #a33a4c 88%, #1c1a20 93%, #15151a 100%);
}
.start { width: 119px; flex: none; background: radial-gradient(circle at 27px 16px, #b5d6ea 14px, #4f86ab 15px, transparent 16px); }
.task { width: 59px; height: 8px; flex: none; border: 1px solid #d8d8d8; border-bottom: 0; border-radius: 2px 2px 0 0; background: linear-gradient(90deg, #d3d3d3, #7d8691); }
.task svg { display: block; width: 57px; height: 8px; }
.rose { background: linear-gradient(90deg, #b99aa0, #8a6a72); }
```
